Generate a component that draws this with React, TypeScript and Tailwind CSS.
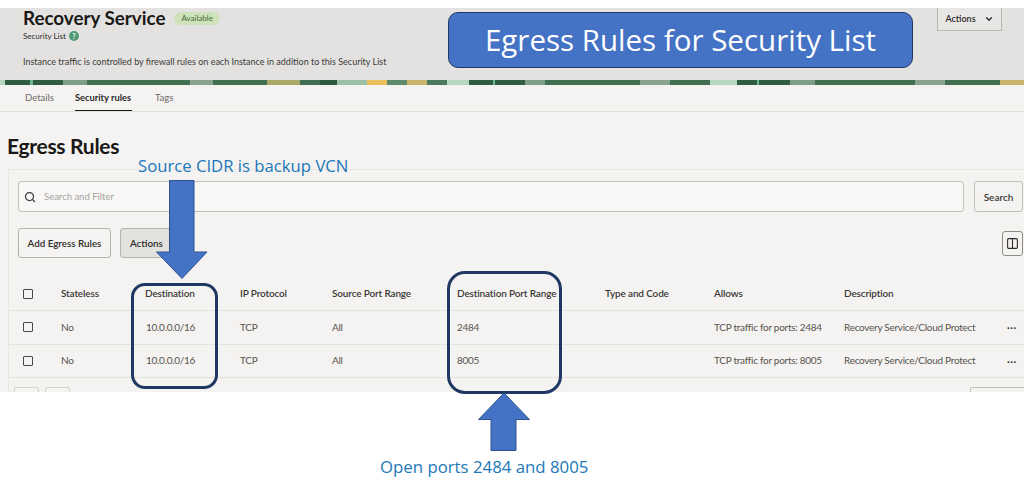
import React from 'react';
import { Search, ChevronDown, Columns2 } from 'lucide-react';

const ui = "font-['Lato','Liberation_Sans',sans-serif]";
const note = "font-['Open_Sans','Noto_Sans',sans-serif]";

const GRID = 'grid grid-cols-[38px_84px_95px_92px_125px_148px_109px_130px_163px_1fr] items-center pl-[14px]';

const rows = [
  { dest: '10.0.0.0/16', port: '2484' },
  { dest: '10.0.0.0/16', port: '8005' },
];

const stripe = [
  'w-[5px] bg-[#b5d6bf]', 'w-[25px] bg-[#2f5c42]', 'w-[3px] bg-[#6fb88f]', 'w-[30px] bg-[#2f5c42]',
  'w-[24px] bg-[#7e9e88]', 'w-[103px] bg-[#40704f]', 'w-[23px] bg-[#8aa28f]', 'w-[54px] bg-[#416f50]',
  'w-[33px] bg-[#a8a868]', 'w-[20px] bg-[#3f6f50]', 'w-[17px] bg-[#2c5a40]', 'w-[30px] bg-[#9cc0a6]',
  'w-[20px] bg-[#e8bf5a]', 'w-[20px] bg-[#5d8a6a]', 'w-[20px] bg-[#c9b56a]', 'w-[20px] bg-[#4a7a5c]',
  'w-[22px] bg-[#b5d6bf]', 'w-[24px] bg-[#2f5c42]', 'w-[2px] bg-[#6fb88f]', 'w-[30px] bg-[#2f5c42]',
  'w-[20px] bg-[#7e9e88]', 'w-[95px] bg-[#40704f]', 'w-[30px] bg-[#8aa28f]', 'w-[40px] bg-[#416f50]',
  'w-[27px] bg-[#b5d6bf]', 'w-[20px] bg-[#2f5c42]', 'w-[2px] bg-[#6fb88f]', 'w-[31px] bg-[#2f5c42]',
  'w-[25px] bg-[#7e9e88]', 'w-[100px] bg-[#40704f]', 'w-[30px] bg-[#8aa28f]', 'w-[55px] bg-[#416f50]',
  'w-[24px] bg-[#c9b56a]',
];

function Checkbox() {
  return <span className="block w-[10px] h-[10px] border border-[#4a4a48] rounded-[1px]" />;
}

export default function App() {
  return (
    <div className={`relative w-[1024px] h-[488px] overflow-hidden bg-white ${ui}`}>
      <div className="pt-2">
        <header className="relative h-[72px] bg-[#e3e2e0] pl-[23px]">
          <div className="flex items-center gap-[9px] h-[20px]">
            <h1 className="text-[18.8px] leading-5 font-bold text-[#1a1816]">Recovery Service</h1>
            <span className="h-[13px] px-[7px] rounded-full bg-[#cfe3bb] text-[8px] leading-[13px] text-[#3f6a35]">Available</span>
          </div>
          <div className="flex items-center gap-[3px] h-[16px] text-[8px] text-[#2c2a28]">
            Security List
            <span className="w-[10px] h-[10px] rounded-full bg-[#4f9a76] text-[7px] leading-[10px] text-center text-white font-bold">?</span>
          </div>
          <p className="mt-[11px] text-[9px] leading-[14px] text-[#3d3b39]">
            Instance traffic is controlled by firewall rules on each Instance in addition to this Security List
          </p>
          <button className="absolute right-[22px] top-0 w-[65px] h-[23px] flex items-center justify-center gap-[8px] border border-t-0 border-[#b8b6b3] bg-[#e8e7e5] text-[9px] font-semibold text-[#2c2a28]">
            Actions <ChevronDown size={10} strokeWidth={3} />
          </button>
        </header>
        <div className="flex h-[5px] overflow-hidden">
          {stripe.map((s, i) => (
            <div key={i} className={`${s} h-full shrink-0`} />
          ))}
        </div>
        <nav className="h-[27px] bg-[#f5f3f1] border-b border-[#e2e0dd] flex pl-[25px] text-[9.5px] text-[#6b6967]">
          <span className="leading-[25px] w-[50px]">Details</span>
          <span className="leading-[25px] h-[26px] w-[57px] font-bold text-[9.3px] text-[#2c2a28] border-b border-[#1a1816] whitespace-nowrap">Security rules</span>
          <span className="leading-[25px] ml-[23px]">Tags</span>
        </nav>
        <main className="h-[280px] bg-[#f5f3f1] pl-2 overflow-hidden">
          <h2 className="pt-[20px] text-[21px] leading-[28px] font-bold text-[#1a1816] -ml-[1px] tracking-[-0.3px]">Egress Rules</h2>
          <section className="mt-[9px] h-[300px] border-l border-t border-[#e8e6e3]">
            <div className="flex gap-[10px] pl-[9px] pt-[11px]">
              <div className="w-[946px] h-[31px] flex items-center gap-[7px] pl-[5px] bg-[#f8f7f5] border border-[#c2c0bd] rounded-[3px]">
                <Search size={12} strokeWidth={2.5} className="text-[#3d3b39]" />
                <span className="text-[9.5px] text-[#a5a3a0] pl-[1px] pt-[2px]">Search and Filter</span>
              </div>
              <button className="w-[49px] h-[31px] pt-[1px] border border-[#c2c0bd] rounded-[3px] text-[10px] font-semibold text-[#3d3b39]">Search</button>
            </div>
            <div className="flex items-center gap-[9px] pl-[9px] pt-[16px] pr-[1px]">
              <button className="w-[93px] h-[30px] border border-[#b5b3b0] rounded-[3px] text-[9.8px] font-semibold text-[#2c2a28]">Add Egress Rules</button>
              <button className="w-[52px] h-[30px] border border-[#b5b3b0] rounded-[3px] bg-[#e3e1de] text-[9.8px] font-semibold text-left pl-[9px] text-[#2c2a28]">Actions</button>
              <button className="ml-auto w-[21px] h-[25px] flex items-center justify-center border border-[#8f8d8a] rounded-[3px] text-[#2c2a28]">
                <Columns2 size={13} strokeWidth={2} />
              </button>
            </div>
            <div className={`${GRID} h-[34px] mt-[19px] border-b border-[#e4e2df] text-[10px] tracking-[-0.15px] font-semibold text-[#3a3836]`}>
              <Checkbox />
              <span>Stateless</span>
              <span>Destination</span>
              <span>IP Protocol</span>
              <span>Source Port Range</span>
              <span>Destination Port Range</span>
              <span>Type and Code</span>
              <span>Allows</span>
              <span>Description</span>
            </div>
            {rows.map((r) => (
              <div key={r.port} className={`${GRID} h-[33.5px] border-b border-[#e4e2df] text-[10px] tracking-[-0.28px] text-[#55534f]`}>
                <Checkbox />
                <span>No</span>
                <span className="pl-[1px]">{r.dest}</span>
                <span>TCP</span>
                <span>All</span>
                <span>{r.port}</span>
                <span />
                <span>TCP traffic for ports: {r.port}</span>
                <span className="whitespace-nowrap">Recovery Service/Cloud Protect</span>
                <span className="font-bold text-[#3a3836] tracking-[0.5px] leading-none">···</span>
              </div>
            ))}
            <div className="flex gap-[6px] pl-[5px] pt-[9px]">
              <span className="w-[25px] h-[10px] border border-[#d5d3d0] rounded-t-[2px]" />
              <span className="w-[25px] h-[10px] border border-[#d5d3d0] rounded-t-[2px]" />
              <span className="ml-auto mr-[-2px] w-[56px] h-[10px] border border-[#c2c0bd] rounded-t-[2px]" />
            </div>
          </section>
        </main>
      </div>

      {/* slide annotations on top of the screenshot */}
      <div className={`absolute left-[448px] top-[12px] w-[465px] h-[56px] pt-[1px] flex items-center justify-center bg-[#4472c4] border border-[#1f3864] rounded-[10px] text-[29.5px] text-white ${note}`}>
        Egress Rules for Security List
      </div>
      <span className={`absolute left-[138px] top-[155px] text-[16.7px] leading-[22px] text-[#2178b8] ${note}`}>Source CIDR is backup VCN</span>
      <span className={`absolute left-[380px] top-[456px] text-[16.8px] leading-[22px] text-[#2178b8] ${note}`}>Open ports 2484 and 8005</span>
      <div className="absolute left-[131px] top-[283px] w-[87px] h-[106px] border-[3px] border-[#1f3864] rounded-[14px]" />
      <div className="absolute left-[447px] top-[271px] w-[115px] h-[123px] border-[3px] border-[#1f3864] rounded-[18px]" />
      <svg className="absolute left-[155px] top-[180px]" width="54" height="100" viewBox="0 0 54 100">
        <path d="M14.5 .5H39V72H52L27 98.5 1.5 72H14.5Z" fill="#4472c4" stroke="#2f528f" />
      </svg>
      <svg className="absolute left-[477px] top-[392px]" width="54" height="60" viewBox="0 0 54 60">
        <path d="M27 1 52.5 27.5H39V58.5H14V27.5H1.5Z" fill="#4472c4" stroke="#2f528f" />
      </svg>
    </div>
  );
}
